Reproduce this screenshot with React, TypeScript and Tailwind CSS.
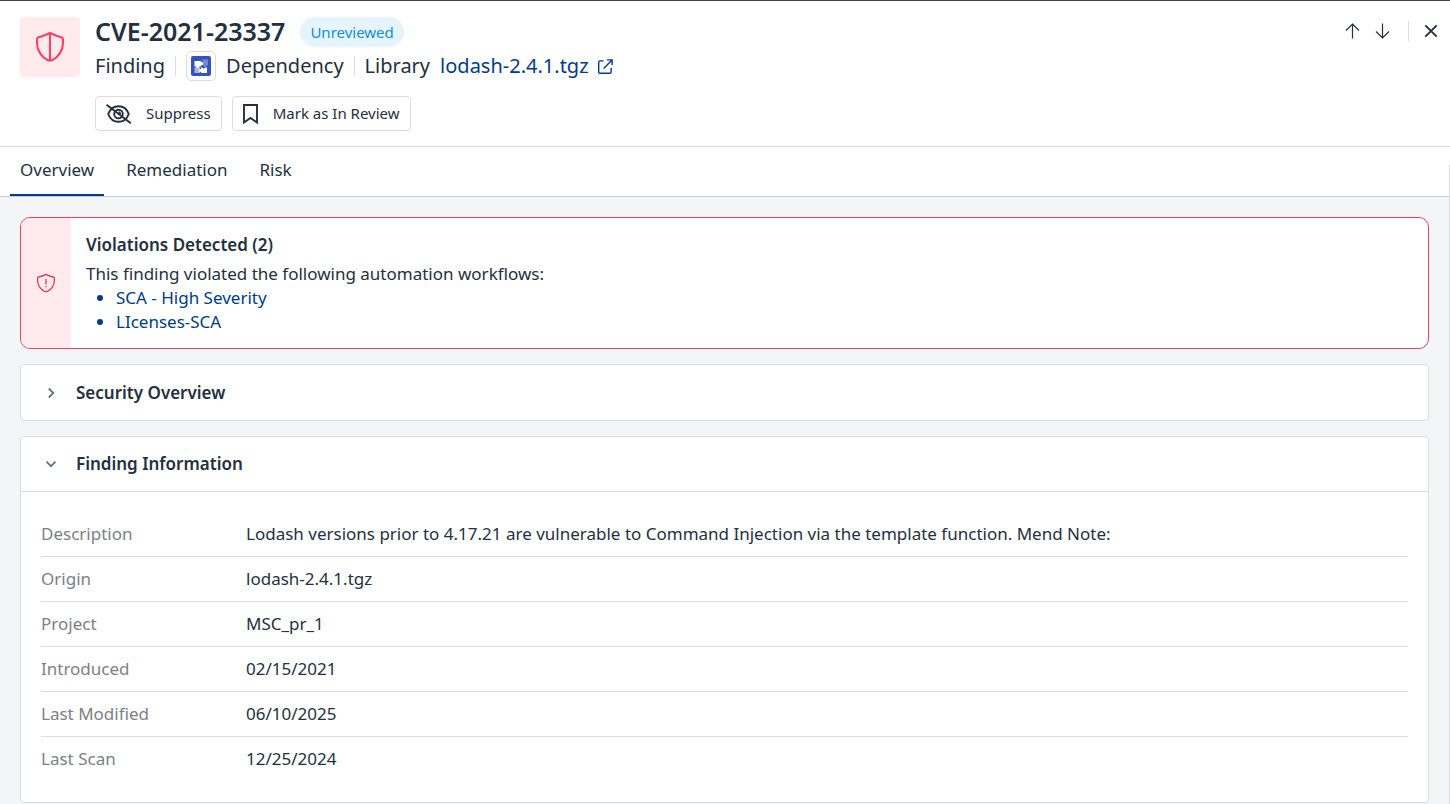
import React, { useState } from "react";

const workflows = ["SCA - High Severity", "LIcenses-SCA"];

const details = [
  { label: "Description", value: "Lodash versions prior to 4.17.21 are vulnerable to Command Injection via the template function. Mend Note:" },
  { label: "Origin", value: "lodash-2.4.1.tgz" },
  { label: "Project", value: "MSC_pr_1" },
  { label: "Introduced", value: "02/15/2021" },
  { label: "Last Modified", value: "06/10/2025" },
  { label: "Last Scan", value: "12/25/2024" },
];

const tabs = ["Overview", "Remediation", "Risk"];

function Separator() {
  return <span className="h-5 w-px shrink-0 bg-[#dcdddf]" />;
}

function FindingIcon() {
  return (
    <div className="flex size-[60px] shrink-0 items-center justify-center rounded-[4px] bg-[#ffebee]">
      <svg width="30" height="30" viewBox="0 0 30 30" fill="none" stroke="#ff4060" strokeWidth="2.1" strokeLinejoin="round">
        <path d="M15 1C11.500 2.600 7.500 4.300 3.600 5.200Q2 5.700 2 7.500V11C2 18.500 7 25.500 12.500 28Q15 29.100 17.500 28C23 25.500 28 18.500 28 11V7.500Q28 5.700 26.400 5.200C22.500 4.300 18.500 2.600 15 1Z" />
        <path d="M15 1V28.800" />
      </svg>
    </div>
  );
}

function DependencyIcon() {
  return (
    <span className="flex size-[30px] shrink-0 items-center justify-center rounded-[5px] border border-[#dcdddf]">
      <svg width="20" height="20" viewBox="0 0 20 20">
        <rect width="20" height="20" rx="2" fill="#3452c0" />
        <path d="M11 3.500H17V9.500H15.500A1.500 1.500 0 0 1 12.500 9.500H11.500V8A1.500 1.500 0 0 0 11.500 5.500Z" fill="#7487d3" />
        <path d="M3.500 11.500H5A1.600 1.600 0 0 1 8 11.500H9V13.300A1.500 1.500 0 0 0 9 16V17H3.500Z" fill="#aab6e5" />
        <path d="M3.500 5H10V6A1.700 1.700 0 1 1 10 9.200V10.500H8.500A1.700 1.700 0 0 1 5 10.500H3.500Z" fill="#fff" />
        <path d="M10 11.500H11.200A1.600 1.600 0 0 0 14.200 11.500H16V17H10V15.800A1.500 1.500 0 1 1 10 13.200Z" fill="#fff" />
      </svg>
    </span>
  );
}

function Chevron({ open }: { open: boolean }) {
  return (
    <svg width="20" height="20" viewBox="0 0 20 20" fill="none" stroke="#607480" strokeWidth="1.8" aria-hidden="true">
      <path d={open ? "M5.500 7.700L10 12.200L14.500 7.700" : "M7.800 5.500L12.300 10L7.800 14.500"} />
    </svg>
  );
}

type PanelProps = {
  title: string;
  defaultOpen?: boolean;
  children?: React.ReactNode;
};

function Panel({ title, defaultOpen = false, children }: PanelProps) {
  const [open, setOpen] = useState(defaultOpen);

  return (
    <section className="rounded-[4px] border border-[#dcdddf] bg-white">
      <h2>
        <button
          type="button"
          aria-expanded={open}
          onClick={() => setOpen(!open)}
          className={`flex h-[55px] w-full items-center gap-[15px] px-5 text-left text-[17px] font-semibold ${
            open ? "border-b border-[#dcdddf]" : ""
          }`}
        >
          <Chevron open={open} />
          {title}
        </button>
      </h2>
      {open && children}
    </section>
  );
}

export default function App() {
  const [activeTab, setActiveTab] = useState("Overview");

  return (
    <div className="flex min-h-screen flex-col border-t border-[#444444] bg-white font-['Noto_Sans',sans-serif] text-[#243040]">
      <header className="flex gap-[15px] border-b border-[#dcdddf] px-5 pb-[15px] pt-4">
        <FindingIcon />
        <div className="flex grow flex-col">
          <div className="flex h-[30px] items-center gap-[15px]">
            <h1 className="text-[25px] font-semibold">CVE-2021-23337</h1>
            <span className="flex h-[30px] items-center rounded-full bg-[#e6f5fd] px-[10px] text-[15px] text-[#1090d0]">
              Unreviewed
            </span>
          </div>
          <div className="mt-1 flex h-[30px] items-center gap-[10px] text-[20px]">
            <span>Finding</span>
            <Separator />
            <DependencyIcon />
            <span>Dependency</span>
            <Separator />
            <span>Library</span>
            <a href="#library" className="flex items-center gap-2 text-[#003c85]">
              lodash-2.4.1.tgz
              <svg width="17" height="17" viewBox="0 0 18 18" fill="none" stroke="currentColor" strokeWidth="1.500" aria-hidden="true">
                <path d="M7 3H3.200Q1.800 3 1.800 4.400V14.800Q1.800 16.200 3.200 16.200H13.600Q15 16.200 15 14.800V10.500" />
                <path d="M10.500 2H16V7.500M16 2L7 11" />
              </svg>
            </a>
          </div>
          <div className="mt-[15px] flex gap-[10px] text-[15px]">
            <button type="button" className="flex h-[35px] items-center gap-[14px] rounded-[4px] border border-[#dcdddf] px-[10px]">
              <svg width="26" height="22" viewBox="0 0 26 22" fill="none" stroke="currentColor" strokeWidth="1.900" aria-hidden="true">
                <path d="M2.200 11C4 6.200 8 3.200 12.500 3.200S21 6.200 22.800 11C21 15.800 17 18.800 12.500 18.800S4 15.800 2.200 11Z" />
                <circle cx="12.500" cy="11" r="4.300" />
                <path d="M12.500 9.300a1.700 1.700 0 0 1 1.700 1.700" />
                <path d="M.6 1.700L24.800 20.300" />
              </svg>
              Suppress
            </button>
            <button type="button" className="flex h-[35px] items-center gap-[15px] rounded-[4px] border border-[#dcdddf] px-[10px]">
              <svg width="15" height="20" viewBox="0 0 15 20" fill="none" stroke="currentColor" strokeWidth="1.900" aria-hidden="true">
                <path d="M1 1H14V18.500L7.500 14L1 18.500Z" />
              </svg>
              Mark as In Review
            </button>
          </div>
        </div>
        <div className="flex h-7 items-center">
          <button type="button" aria-label="Previous finding" className="flex size-[30px] items-center justify-center">
            <svg width="16" height="16" viewBox="0 0 16 16" fill="none" stroke="currentColor" strokeWidth="1.200">
              <path d="M8.500 15.500V1M2 7.500L8.500 1L15 7.500" />
            </svg>
          </button>
          <button type="button" aria-label="Next finding" className="flex size-[30px] items-center justify-center">
            <svg width="16" height="16" viewBox="0 0 16 16" fill="none" stroke="currentColor" strokeWidth="1.200">
              <path d="M8.500 .5V15M2 8.500L8.500 15L15 8.500" />
            </svg>
          </button>
          <span className="ml-[11px] mr-[15px] flex">
            <Separator />
          </span>
          <button type="button" aria-label="Close" className="-mr-2 flex h-[30px] items-center">
            <svg width="14" height="14" viewBox="0 0 14 14" fill="none" stroke="currentColor" strokeWidth="1.900">
              <path d="M1.300 1.300L12.700 12.700M12.700 1.300L1.300 12.700" />
            </svg>
          </button>
        </div>
      </header>

      <div className="relative flex grow flex-col">
        <nav className="flex h-[50px] gap-3 border-b border-[#c8ccd1] px-[10px]">
          {tabs.map((tab) => (
            <button
              key={tab}
              type="button"
              onClick={() => setActiveTab(tab)}
              className={`border-b-2 px-[10px] pb-[2px] text-[17px] ${
                activeTab === tab ? "border-[#003c85]" : "border-transparent"
              }`}
            >
              {tab}
            </button>
          ))}
        </nav>

        <main className="flex grow flex-col gap-[15px] bg-[#f4f5f7] pb-[2px] pl-5 pr-[21px] pt-5 text-[17px]">
          <section className="flex overflow-hidden rounded-[10px] border border-[#f23d5c] bg-white">
            <div className="flex w-[50px] items-center justify-center bg-[#ffebee]">
              <svg width="20" height="20" viewBox="0 0 20 20" fill="none" stroke="#e03a58" strokeWidth="1.300" strokeLinejoin="round" aria-hidden="true">
                <path d="M10 1.400C7.500 2.700 5 3.600 2.700 4Q1.600 4.300 1.600 5.500V7.500C1.600 12.500 4.800 16.800 8.500 18.400Q10 19 11.500 18.400C15.200 16.800 18.400 12.500 18.400 7.500V5.500Q18.400 4.300 17.300 4C15 3.600 12.500 2.700 10 1.400Z" />
                <path d="M10 6V11.500M10 13V14.300" />
              </svg>
            </div>
            <div className="px-[15px] pb-[14px] pt-[15px] leading-6">
              <h2 className="font-semibold">Violations Detected (2)</h2>
              <p className="mt-[5px]">This finding violated the following automation workflows:</p>
              <ul className="list-disc pl-[30px] text-[#003c85]">
                {workflows.map((name) => (
                  <li key={name}>
                    <a href="#workflow">{name}</a>
                  </li>
                ))}
              </ul>
            </div>
          </section>

          <Panel title="Security Overview" />

          <Panel title="Finding Information" defaultOpen>
            <div className="p-5">
              <table className="w-full table-fixed border-separate border-spacing-0 text-left leading-6">
                <tbody>
                  {details.map((row) => (
                    <tr key={row.label} className="group">
                      <th scope="row" className="h-[45px] w-[205px] border-b border-[#dcdddf] font-normal text-[#7b8185] group-last:border-transparent">
                        {row.label}
                      </th>
                      <td className="border-b border-[#dcdddf] group-last:border-transparent">{row.value}</td>
                    </tr>
                  ))}
                </tbody>
              </table>
            </div>
          </Panel>
        </main>

        {/* scroll track edge */}
        <div className="absolute bottom-0 right-0 top-[18px] w-px bg-[#dcdddf]" />
      </div>
    </div>
  );
}
